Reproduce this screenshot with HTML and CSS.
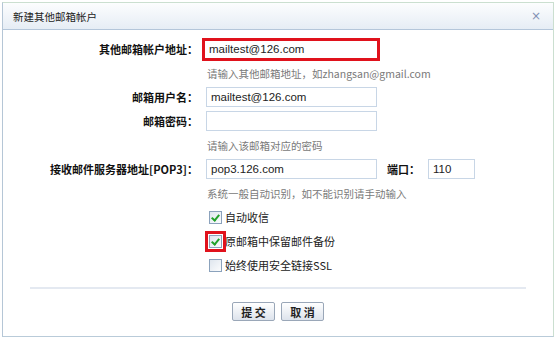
FILE: index.html
```html
<!DOCTYPE html>
<html lang="zh-CN">
<head>
    <meta charset="UTF-8">
    <title>新建其他邮箱帐户</title>
    <link rel="stylesheet" href="styles.css">
</head>
<body>

<div class="dialog">
    <div class="dialog-title">
        <span>新建其他邮箱帐户</span>
        <span class="close">×</span>
    </div>

    <form class="dialog-body">
        <label class="field-label">其他邮箱帐户地址：</label>
        <div class="field"><input type="text" class="text-input mark" value="mailtest@126.com"></div>

        <span></span>
        <div class="hint">请输入其他邮箱地址，如zhangsan@gmail.com</div>

        <label class="field-label">邮箱用户名：</label>
        <div class="field"><input type="text" class="text-input" value="mailtest@126.com"></div>

        <label class="field-label">邮箱密码：</label>
        <div class="field"><input type="password" class="text-input"></div>

        <span></span>
        <div class="hint">请输入该邮箱对应的密码</div>

        <label class="field-label">接收邮件服务器地址[POP3]：</label>
        <div class="field">
            <input type="text" class="text-input" value="pop3.126.com">
            <label class="port-label">端口：</label>
            <input type="text" class="text-input port" value="110">
        </div>

        <span></span>
        <div class="hint">系统一般自动识别，如不能识别请手动输入</div>

        <span></span>
        <div class="check-row">
            <span class="checkbox checked"></span>
            <span>自动收信</span>
        </div>

        <span></span>
        <div class="check-row">
            <span class="checkbox checked mark"></span>
            <span>原邮箱中保留邮件备份</span>
        </div>

        <span></span>
        <div class="check-row">
            <span class="checkbox"></span>
            <span>始终使用安全链接SSL</span>
        </div>
    </form>

    <div class="separator"></div>

    <div class="buttons">
        <button type="button">提 交</button>
        <button type="button">取 消</button>
    </div>
</div>

</body>
</html>
```

FILE: styles.css
```css
* {
    margin: 0;
    padding: 0;
    box-sizing: border-box;
}
body {
    background: #fff;
    font-family: "Noto Sans CJK SC", "Liberation Sans", sans-serif;
    font-size: 11px;
    color: #222;
}
.dialog {
    margin: 2px 4px 0 2px;
    border: 1px solid #cbdfd0;
    border-left-color: #b5c6d6;
    border-bottom-color: #b9cbd9;
    background: #fff;
}
.dialog-title {
    height: 27px;
    display: flex;
    align-items: center;
    justify-content: space-between;
    padding: 0 12px 0 10px;
    background: linear-gradient(#fcfdfe, #e6edf5);
    border-bottom: 1px solid #b4c6da;
    font-size: 10.5px;
    color: #222;
}
.close {
    color: #8290b4;
    font-family: "DejaVu Sans", sans-serif;
    font-size: 12px;
}
.dialog-body {
    display: grid;
    grid-template-columns: 195px 1fr;
    grid-auto-rows: 24px;
    column-gap: 8px;
    align-items: center;
    padding-top: 7px;
}
.field-label {
    text-align: right;
    font-weight: bold;
    color: #111;
    white-space: nowrap;
}
.field {
    display: flex;
    align-items: center;
}
.text-input {
    width: 171px;
    height: 20px;
    border: 1px solid #c8d6e6;
    padding: 0 4px;
    font-family: "Liberation Sans", sans-serif;
    font-size: 11.5px;
    color: #222;
    outline: none;
}
.text-input.mark {
    border: 3px solid #e0121c;
    width: 178px;
    height: 23px;
    margin-left: -4px;
    padding-left: 4px;
}
.port-label {
    font-weight: bold;
    color: #111;
    margin-left: 10px;
    width: 41px;
}
.text-input.port {
    width: 47px;
}
.hint {
    color: #7a7a7a;
    font-size: 10.5px;
    padding-left: 1px;
}
.check-row {
    display: flex;
    align-items: center;
    gap: 3px;
    padding-left: 3px;
    color: #222;
}
.checkbox {
    width: 13px;
    height: 13px;
    border: 1px solid #8ba2bc;
    background: linear-gradient(135deg, #dfe6ee, #fbfcfd);
    position: relative;
}
.checkbox.checked::after {
    content: "";
    position: absolute;
    left: 3px;
    top: 1px;
    width: 3px;
    height: 6px;
    border: solid #22a12a;
    border-width: 0 2px 2px 0;
    transform: rotate(40deg);
}
.checkbox.mark {
    outline: 3px solid #e0121c;
    outline-offset: 1px;
}
.separator {
    height: 2px;
    background: #e4e9f1;
    margin: 10px 27px 0 27px;
}
.buttons {
    display: flex;
    justify-content: center;
    gap: 6px;
    padding: 13px 0 15px;
}
button {
    width: 43px;
    height: 19px;
    border: 1px solid #9aa7b8;
    border-radius: 2px;
    background: linear-gradient(#ffffff, #dde3ec);
    font-family: "Noto Sans CJK SC", sans-serif;
    font-size: 11px;
    font-weight: bold;
    color: #222;
    cursor: pointer;
}
```
